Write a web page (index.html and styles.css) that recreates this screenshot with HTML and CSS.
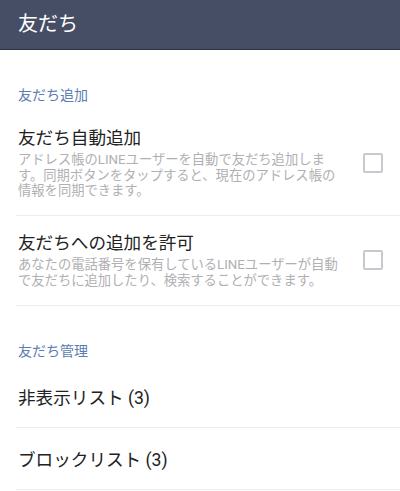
FILE: index.html
```html
<!DOCTYPE html>
<html lang="ja">
<head>
<meta charset="utf-8">
<title>友だち</title>
<link rel="stylesheet" href="styles.css">
</head>
<body>
<header class="appbar"><h1 class="appbar-title">友だち</h1></header>
<main>
  <section class="group">
    <h2 class="group-title">友だち追加</h2>
    <div class="item">
      <div class="item-text">
        <div class="item-title">友だち自動追加</div>
        <div class="item-desc">アドレス帳のLINEユーザーを自動で友だち追加します。同期ボタンをタップすると、現在のアドレス帳の情報を同期できます。</div>
      </div>
      <span class="checkbox"></span>
    </div>
    <div class="item">
      <div class="item-text">
        <div class="item-title">友だちへの追加を許可</div>
        <div class="item-desc">あなたの電話番号を保有しているLINEユーザーが自動で友だちに追加したり、検索することができます。</div>
      </div>
      <span class="checkbox"></span>
    </div>
  </section>
  <section class="group">
    <h2 class="group-title">友だち管理</h2>
    <div class="row">非表示リスト (3)</div>
    <div class="row">ブロックリスト (3)</div>
  </section>
</main>
</body>
</html>
```
FILE: styles.css
```css
html, body {
  margin: 0;
  padding: 0;
  background: #ffffff;
}
body {
  width: 400px;
  font-family: "Roboto", "Noto Sans CJK JP", sans-serif;
  color: #222222;
}
.appbar {
  height: 47px;
  padding: 0 0 2px 18px;
  background: #464e65;
  border-bottom: 1px solid #2e3242;
  display: flex;
  align-items: center;
}
.appbar-title {
  margin: 0;
  font-size: 20px;
  font-weight: 400;
  line-height: 26px;
  color: #ffffff;
}
.group-title {
  margin: 0;
  padding: 35px 18px 6px;
  font-size: 14px;
  line-height: 20px;
  font-weight: 400;
  color: #5b7eb2;
}
.item {
  margin-left: 16px;
  padding: 16px 17px 16.5px 2px;
  border-bottom: 1px solid #ececec;
  display: flex;
  align-items: center;
}
.item-text {
  width: 325px;
}
.item-title {
  font-size: 17.6px;
  font-weight: 400;
  line-height: 22px;
  color: #222222;
}
.item-desc {
  margin-top: 3px;
  font-size: 13.3px;
  font-weight: 400;
  line-height: 15.5px;
  color: #b0b0b3;
}
.checkbox {
  margin-left: auto;
  width: 16px;
  height: 16px;
  border: 2px solid #c8c8ce;
  border-radius: 2px;
  flex: none;
}
.group + .group .group-title {
  padding-bottom: 5px;
}
.row {
  margin-left: 16px;
  padding-left: 2px;
  height: 61px;
  display: flex;
  align-items: center;
  font-size: 17.6px;
  font-weight: 400;
  color: #222222;
  border-bottom: 1px solid #ececec;
}
```
